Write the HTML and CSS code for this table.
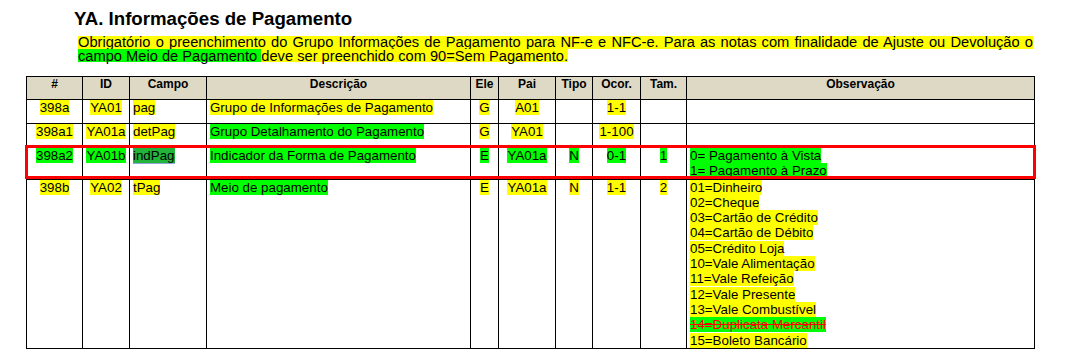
FILE: index.html
```html
<!DOCTYPE html>
<html lang="pt-BR">
<head>
<meta charset="utf-8">
<title>YA. Informações de Pagamento</title>
<link rel="stylesheet" href="styles.css">
</head>
<body>
<div class="page">
  <h1 class="title">YA. Informações de Pagamento</h1>
  <p class="intro"><span class="band-y">Obrigatório o preenchimento do Grupo Informações de Pagamento para NF-e e NFC-e. Para as notas com finalidade de Ajuste ou Devolução o</span> <span class="band-g">campo Meio de Pagamento </span><span class="band-y">deve ser preenchido com 90=Sem Pagamento.</span></p>

  <div class="table-wrap">
    <table class="spec">
      <colgroup>
        <col class="c-num"><col class="c-id"><col class="c-campo"><col class="c-desc"><col class="c-ele"><col class="c-pai"><col class="c-tipo"><col class="c-ocor"><col class="c-tam"><col class="c-obs">
      </colgroup>
      <thead>
        <tr class="head-row">
          <th>#</th><th>ID</th><th>Campo</th><th>Descrição</th><th>Ele</th><th>Pai</th><th>Tipo</th><th>Ocor.</th><th>Tam.</th><th>Observação</th>
        </tr>
      </thead>
      <tbody>
        <tr class="row-short">
          <td class="ctr"><span class="y">398a</span></td>
          <td class="ctr"><span class="y">YA01</span></td>
          <td><span class="y">pag</span></td>
          <td><span class="y">Grupo de Informações de Pagamento</span></td>
          <td class="ctr"><span class="y">G</span></td>
          <td class="ctr"><span class="y">A01</span></td>
          <td class="ctr"></td>
          <td class="ctr"><span class="y">1-1</span></td>
          <td class="ctr"></td>
          <td></td>
        </tr>
        <tr class="row-short">
          <td class="ctr"><span class="y">398a1</span></td>
          <td class="ctr"><span class="y">YA01a</span></td>
          <td><span class="y">detPag</span></td>
          <td><span class="g">Grupo Detalhamento do Pagamento</span></td>
          <td class="ctr"><span class="y">G</span></td>
          <td class="ctr"><span class="y">YA01</span></td>
          <td class="ctr"></td>
          <td class="ctr"><span class="y">1-100</span></td>
          <td class="ctr"></td>
          <td></td>
        </tr>
        <tr>
          <td class="ctr"><span class="g">398a2</span></td>
          <td class="ctr"><span class="g">YA01b</span></td>
          <td><span class="g-dark">indPag</span></td>
          <td><span class="g">Indicador da Forma de Pagamento</span></td>
          <td class="ctr"><span class="g">E</span></td>
          <td class="ctr"><span class="g">YA01a</span></td>
          <td class="ctr"><span class="g">N</span></td>
          <td class="ctr"><span class="g">0-1</span></td>
          <td class="ctr"><span class="g">1</span></td>
          <td><span class="g">0= Pagamento à Vista</span><br><span class="g">1= Pagamento à Prazo</span></td>
        </tr>
        <tr>
          <td class="ctr"><span class="y">398b</span></td>
          <td class="ctr"><span class="y">YA02</span></td>
          <td><span class="y">tPag</span></td>
          <td><span class="g">Meio de pagamento</span></td>
          <td class="ctr"><span class="y">E</span></td>
          <td class="ctr"><span class="y">YA01a</span></td>
          <td class="ctr"><span class="y">N</span></td>
          <td class="ctr"><span class="y">1-1</span></td>
          <td class="ctr"><span class="y">2</span></td>
          <td>
            <span class="y">01=Dinheiro</span><br>
            <span class="y">02=Cheque</span><br>
            <span class="y">03=Cartão de Crédito</span><br>
            <span class="y">04=Cartão de Débito</span><br>
            <span class="y">05=Crédito Loja</span><br>
            <span class="y">10=Vale Alimentação</span><br>
            <span class="y">11=Vale Refeição</span><br>
            <span class="y">12=Vale Presente</span><br>
            <span class="y">13=Vale Combustível</span><br>
            <span class="g struck">14=Duplicata Mercantil</span><br>
            <span class="y">15=Boleto Bancário</span>
          </td>
        </tr>
      </tbody>
    </table>
    <div class="row-mark"></div>
  </div>

  <div class="page-num">17</div>
</div>
</body>
</html>
```

FILE: styles.css
```css
html, body {
  margin: 0;
  padding: 0;
  background: #ffffff;
}

body {
  font-family: "Liberation Sans", Arial, sans-serif;
  color: #000000;
}

.page {
  width: 1067px;
  overflow: hidden;
}

.title {
  margin: 8px 0 0 74px;
  font-size: 18.67px;
  line-height: 22px;
  font-weight: bold;
}

.intro {
  margin: 6px 0 0 78px;
  width: 955px;
  font-size: 14.67px;
  line-height: 13.5px;
  text-align: justify;
}

.band-y {
  background: linear-gradient(#ffff00, #ffff00) 0 50% / 100% 13px no-repeat;
}

.band-g {
  background: linear-gradient(#00ff00, #00ff00) 0 50% / 100% 13px no-repeat;
}

.table-wrap {
  position: relative;
  margin: 13px 0 0 26px;
  width: 1009px;
}

.spec {
  border-collapse: collapse;
  table-layout: fixed;
  width: 1009px;
  font-size: 13.33px;
  line-height: 15.3px;
}

.c-num { width: 56px; }
.c-id { width: 47px; }
.c-campo { width: 77px; }
.c-desc { width: 264px; }
.c-ele { width: 28px; }
.c-pai { width: 57px; }
.c-tipo { width: 37px; }
.c-ocor { width: 48px; }
.c-tam { width: 46px; }
.c-obs { width: 348px; }

.spec th,
.spec td {
  border: 1px solid #000000;
  padding: 0 2px 0 3px;
  vertical-align: top;
  text-align: left;
  white-space: nowrap;
  overflow: hidden;
}

.spec th {
  background: #ddd9c4;
  font-size: 12px;
  font-weight: bold;
  text-align: center;
  padding: 0 1px;
}

.head-row {
  height: 23px;
}

.row-short {
  height: 24px;
}

.spec td.ctr {
  text-align: center;
  padding: 0 1px;
}

.y {
  background: #ffff00;
}

.g {
  background: #00ff00;
}

.g-dark {
  background: #22b33a;
  border-bottom: 1px solid #8fa6d6;
}

.struck {
  color: #ff0000;
  text-decoration: line-through;
  text-decoration-color: #ff0000;
}

.row-mark {
  position: absolute;
  left: -1px;
  top: 69px;
  width: 1005px;
  height: 28px;
  border: 3px solid #ff0000;
  pointer-events: none;
}

.page-num {
  margin: 14px 0 0 582px;
  font-size: 10px;
  line-height: 12px;
  color: #9a9a9a;
}
```
